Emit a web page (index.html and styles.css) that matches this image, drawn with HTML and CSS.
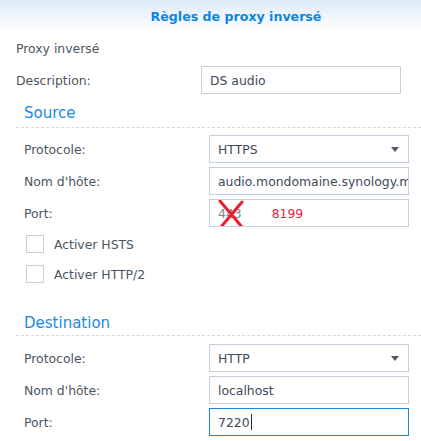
FILE: index.html
```html
<!DOCTYPE html>
<html lang="fr">
<head>
<meta charset="utf-8">
<title>Règles de proxy inversé</title>
<link rel="stylesheet" href="styles.css">
</head>
<body>
<div class="dialog">
  <div class="header"><span class="title">Règles de proxy inversé</span></div>
  <div class="form">
    <div class="row"><span class="label">Proxy inversé</span></div>
    <div class="row">
      <span class="label">Description:</span>
      <div class="field"><span class="value">DS audio</span></div>
    </div>

    <div class="section">
      <div class="section-title"><span>Source</span></div>
      <div class="section-body">
        <div class="row">
          <span class="label">Protocole:</span>
          <div class="field select"><span class="value">HTTPS</span><span class="arrow"></span></div>
        </div>
        <div class="row">
          <span class="label">Nom d'hôte:</span>
          <div class="field"><span class="value clip">audio.mondomaine.synology.me</span></div>
        </div>
        <div class="row">
          <span class="label">Port:</span>
          <div class="field port">
            <span class="value">443</span>
            <span class="new-port">8199</span>
            <svg class="cross" width="26" height="30" viewBox="0 0 26 30">
              <path d="M2 2 L24 28 M24 3 L3 28" stroke="#e8202c" stroke-width="3" fill="none" stroke-linecap="round"/>
            </svg>
          </div>
        </div>
        <div class="check-list">
          <label class="check"><span class="box"></span><span>Activer HSTS</span></label>
          <label class="check"><span class="box"></span><span>Activer HTTP/2</span></label>
        </div>
      </div>
    </div>

    <div class="section dest">
      <div class="section-title"><span>Destination</span></div>
      <div class="section-body">
        <div class="row">
          <span class="label">Protocole:</span>
          <div class="field select"><span class="value">HTTP</span><span class="arrow"></span></div>
        </div>
        <div class="row">
          <span class="label">Nom d'hôte:</span>
          <div class="field"><span class="value">localhost</span></div>
        </div>
        <div class="row">
          <span class="label">Port:</span>
          <div class="field focus"><span class="value">7220</span><span class="caret"></span></div>
        </div>
      </div>
    </div>
  </div>
</div>
</body>
</html>
```

FILE: styles.css
```css
html, body {
  margin: 0;
  padding: 0;
  background: #ffffff;
}
body {
  font-family: "DejaVu Sans", Verdana, sans-serif;
  font-size: 12.4px;
  color: #4a5562;
}
.dialog {
  width: 421px;
  height: 441px;
  overflow: hidden;
}
.header {
  height: 32px;
  display: flex;
  align-items: center;
  justify-content: center;
  background: linear-gradient(to bottom, #dce9f8 0%, #eef4fc 45%, #ffffff 100%);
}
.title {
  font-weight: bold;
  color: #0c86e6;
  font-size: 12.6px;
  padding-left: 51px;
}
.form {
  padding: 2px 0 0 16px;
}
.row {
  display: flex;
  align-items: center;
  height: 28px;
  margin-bottom: 4px;
}
.label {
  width: 185px;
  flex: none;
}
.field {
  position: relative;
  box-sizing: border-box;
  width: 200px;
  height: 28px;
  border: 1px solid #c6d0dd;
  display: flex;
  align-items: center;
  padding-left: 8px;
  background: #fff;
  color: #3e4a59;
  overflow: hidden;
}
.value {
  white-space: nowrap;
}
.select .arrow {
  position: absolute;
  right: 9px;
  top: 11px;
  width: 0;
  height: 0;
  border-left: 4.5px solid transparent;
  border-right: 4.5px solid transparent;
  border-top: 5px solid #4f5a66;
}
.port .value {
  color: #7b8590;
}
.new-port {
  margin-left: 30px;
  color: #f0203c;
}
.cross {
  position: absolute;
  left: 8px;
  top: -1px;
}
.focus {
  border-color: #1786e4;
}
.caret {
  display: inline-block;
  width: 1px;
  height: 16px;
  background: #222;
  margin-left: 1px;
}
.section-title {
  height: 29px;
  border-bottom: 1px dashed #d3dae3;
  display: flex;
  align-items: center;
  padding-left: 8px;
  font-size: 15px;
  color: #1a8ae6;
}
.section-body {
  padding: 7px 0 0 8px;
}
.check-list {
  display: flex;
  flex-direction: column;
  gap: 12px;
  padding: 4px 0 0 2px;
}
.check {
  display: flex;
  align-items: center;
  height: 18px;
  gap: 10px;
}
.box {
  box-sizing: border-box;
  width: 18px;
  height: 18px;
  border: 1px solid #c6d0dd;
  background: #fff;
}
.dest {
  margin-top: 20px;
}
.dest .section-title {
  height: 25px;
  padding-top: 7px;
}
.dest .section-body {
  padding-top: 8px;
}
```
